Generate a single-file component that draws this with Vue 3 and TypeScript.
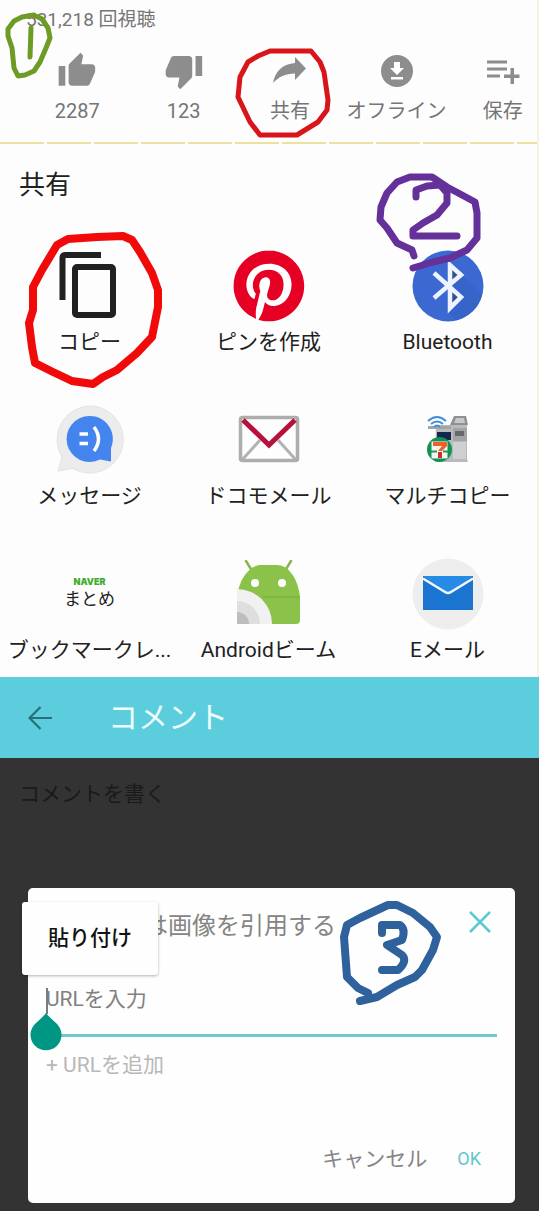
<script setup lang="ts">
import { ref } from 'vue'

type ActionIcon = 'up' | 'down' | 'share' | 'offline' | 'save'
type AppIcon = 'copy' | 'pinterest' | 'bluetooth' | 'message' | 'docomo' | 'printer' | 'naver' | 'android' | 'email'

const actions: { icon: ActionIcon; label: string }[] = [
  { icon: 'up', label: '2287' },
  { icon: 'down', label: '123' },
  { icon: 'share', label: '共有' },
  { icon: 'offline', label: 'オフライン' },
  { icon: 'save', label: '保存' },
]

const targets: { icon: AppIcon; label: string }[] = [
  { icon: 'copy', label: 'コピー' },
  { icon: 'pinterest', label: 'ピンを作成' },
  { icon: 'bluetooth', label: 'Bluetooth' },
  { icon: 'message', label: 'メッセージ' },
  { icon: 'docomo', label: 'ドコモメール' },
  { icon: 'printer', label: 'マルチコピー' },
  { icon: 'naver', label: 'ブックマークレ...' },
  { icon: 'android', label: 'Androidビーム' },
  { icon: 'email', label: 'Eメール' },
]

const comment = ref('')
const url = ref('')
</script>

<template>
  <main class="page">
    <section class="video">
      <p class="views">531,218 回視聴</p>
      <div class="actions">
        <button v-for="a in actions" :key="a.icon" class="action" type="button">
          <svg class="action-icon" viewBox="0 0 40 40" aria-hidden="true">
            <path v-if="a.icon === 'up'" transform="scale(1.66)" d="M1 21h4V9H1v12zm22-11c0-1.1-.9-2-2-2h-6.310l.95-4.570.03-.32c0-.41-.17-.79-.44-1.060L14.170 1 7.590 7.590C7.220 7.950 7 8.450 7 9v10c0 1.100.9 2 2 2h9c.83 0 1.540-.5 1.840-1.220l3.020-7.050c.09-.23.14-.47.14-.73v-2z" />
            <path v-else-if="a.icon === 'down'" transform="scale(1.66)" d="M15 3H6c-.83 0-1.540.5-1.840 1.220l-3.020 7.050c-.09.23-.14.47-.14.73v2c0 1.100.9 2 2 2h6.310l-.95 4.570-.03.32c0 .41.17.79.44 1.060L9.830 23l6.590-6.590c.36-.36.58-.86.58-1.410V5c0-1.100-.9-2-2-2zm4 0v12h4V3h-4z" />
            <path v-else-if="a.icon === 'share'" d="M25 6 36 17.500 25 29v-6.500C15 22.500 9 26 3 32 5 21 12 13 25 12z" />
            <g v-else-if="a.icon === 'offline'">
              <circle cx="21" cy="20" r="16" />
              <path fill="#fff" d="M18 11h6v6h4l-7 7-7-7h4zM15 26h12v2.500H15z" />
            </g>
            <path v-else d="M4 9.500h20v3H4zM4 16.500h20v3H4zM4 23.500h13v3H4zM27.500 17h3.500v6.500h5.500V27H31v6h-3.500v-6H21v-3.500h6.500z" />
          </svg>
          <span>{{ a.label }}</span>
        </button>
      </div>
    </section>

    <section class="share">
      <h2 class="share-title">共有</h2>
      <div class="targets">
        <button v-for="t in targets" :key="t.icon" class="target" type="button">
          <span v-if="t.icon === 'naver'" class="target-icon naver">
            <b>NAVER</b>
            <span>まとめ</span>
          </span>
          <svg v-else class="target-icon" viewBox="0 0 72 72" aria-hidden="true">
            <g v-if="t.icon === 'copy'" fill="none" stroke="#212121" stroke-width="6">
              <path d="M8.500 50V8q0-3 3-3H47" />
              <rect x="21" y="17" width="38" height="48" rx="2" />
            </g>
            <g v-else-if="t.icon === 'pinterest'">
              <circle cx="36" cy="36" r="34" fill="#fff" />
              <path transform="translate(.5 .5) scale(2.950)" fill="#e60023" d="M12.017 0C5.396 0 .029 5.367.029 11.987c0 5.079 3.158 9.417 7.618 11.162-.105-.949-.199-2.403.041-3.439.219-.937 1.406-5.957 1.406-5.957s-.359-.72-.359-1.781c0-1.663.967-2.911 2.168-2.911 1.024 0 1.518.769 1.518 1.688 0 1.029-.653 2.567-.992 3.992-.285 1.193.6 2.165 1.775 2.165 2.128 0 3.768-2.245 3.768-5.487 0-2.861-2.063-4.869-5.008-4.869-3.410 0-5.409 2.562-5.409 5.199 0 1.033.394 2.143.889 2.741.099.12.112.225.085.345-.09.375-.293 1.199-.334 1.363-.053.225-.172.271-.401.165-1.495-.69-2.433-2.878-2.433-4.646 0-3.776 2.748-7.252 7.920-7.252 4.158 0 7.392 2.967 7.392 6.923 0 4.135-2.607 7.462-6.233 7.462-1.214 0-2.354-.629-2.758-1.379l-.749 2.848c-.269 1.045-1.004 2.352-1.498 3.146 1.123.345 2.306.535 3.550.535 6.607 0 11.985-5.365 11.985-11.987C23.970 5.390 18.592.026 11.985.026z" />
            </g>
            <g v-else-if="t.icon === 'bluetooth'">
              <circle cx="36" cy="36" r="35.500" fill="#3b69d1" />
              <path d="M38 14 49 24l21 21A35.500 35.500 0 0 1 44 70.500L36 60z" fill="#3764c9" />
              <path d="M38 15v42l11-10-9-11 9-11z" fill="#31518f" />
              <path d="M22 23 49 47 38 58V15L49 25 22 48" fill="none" stroke="#eef4ff" stroke-width="4.500" />
            </g>
            <g v-else-if="t.icon === 'message'">
              <path d="M36 2A33.500 33.500 0 1 1 19 64.500L4 67 8 53A33.500 33.500 0 0 1 36 2z" fill="#ececec" stroke="#e4e4e4" />
              <path d="M35.500 12A23 23 0 0 1 57 44v13.500L46 55.500A23 23 0 1 1 35.500 12z" fill="#4384ee" />
              <path d="M25.500 30H34M25.500 39.500H34M40 23q9 12 0 24" fill="none" stroke="#fff" stroke-width="3.500" />
            </g>
            <g v-else-if="t.icon === 'docomo'" fill="none">
              <path d="M9 56 27 36M63 56 45 36" stroke="#b2b2b2" stroke-width="3" />
              <rect x="7.500" y="13.500" width="57" height="43" rx="2" stroke="#adadad" stroke-width="3.500" />
              <path d="M10 16 36 41 62 16" stroke="#b80f3d" stroke-width="5" />
            </g>
            <g v-else-if="t.icon === 'printer'">
              <path d="M42 12h12l2 9H38z" fill="#8f9092" />
              <path d="M44 14h8l1 5H42z" fill="#c8c9ca" />
              <path d="M24 21h31v34l1 3H23z" fill="#b9babc" />
              <path d="M16 22h23v3H16zM41 24h14v13H41z" fill="#a3a4a7" />
              <path d="M43 27h9v5h-9z" fill="#68696c" />
              <path d="M25 28h14v8H25z" fill="#13264e" />
              <path d="M41 38h13v17H41z" fill="#cfd0d1" />
              <g fill="none" stroke="#438ed5" stroke-width="2">
                <path d="M16 17q9-8 18 0M19 20q6-5 12 0M22 23q3-3 6 0" />
              </g>
              <circle cx="27.500" cy="45.500" r="12.500" fill="#119353" />
              <path d="M19.500 37.500h16v17h-16z" fill="#f4f6ee" />
              <path d="M21 38h14v4L30 47h-4l4-5h-9z" fill="#ee612c" />
              <path d="M26 48h4v6h-4z" fill="#c9322b" />
              <path d="M19 46.500h6v2h-6zM31 46.500h5v2h-5z" fill="#28965e" />
            </g>
            <g v-else-if="t.icon === 'android'">
              <path d="M13 3l8 13M58 3l-8 13" stroke="#8bb351" stroke-width="2.500" stroke-linecap="round" />
              <path d="M4 39C6 20 17 7 28 7h16c11 0 21 13 23 32v23q0 4-4 4H4z" fill="#8bc34a" />
              <path d="M30 39h37" stroke="#76a83d" />
              <circle cx="22" cy="25" r="4" fill="#fff" />
              <circle cx="49" cy="25" r="4" fill="#fff" />
              <path d="M4 31a35 35 0 0 1 35 35H4z" fill="#f1f1f1" />
              <path d="M4 43a23 23 0 0 1 23 23H4z" fill="#dedede" />
              <path d="M4 54a12 12 0 0 1 12 12H4z" fill="#bdbdbd" />
            </g>
            <g v-else>
              <circle cx="36" cy="36" r="35.500" fill="#efeeee" />
              <path d="M11 18h50v34H11z" fill="#1b75d0" />
              <path d="M11 18h50L36 36z" fill="#268be5" />
              <path d="M11 20.500 33 34q3 2 6 0l22-13.500" fill="none" stroke="#f2f9ff" stroke-width="2.500" />
            </g>
          </svg>
          <span class="target-label">{{ t.label }}</span>
        </button>
      </div>
    </section>

    <header class="appbar">
      <button class="back" type="button" aria-label="戻る">
        <svg viewBox="0 0 24 24" aria-hidden="true">
          <path d="M24 12H2M12.500 1 1.500 12l11 11" fill="none" stroke="#286f79" stroke-width="2.200" />
        </svg>
      </button>
      <h1>コメント</h1>
    </header>

    <section class="compose">
      <textarea v-model="comment" class="comment" aria-label="コメント" placeholder="コメントを書く"></textarea>

      <form class="dialog" @submit.prevent>
        <div class="dialog-head">
          <label for="url">は画像を引用する</label>
          <button class="close" type="button" aria-label="閉じる">
            <svg viewBox="0 0 22 22" aria-hidden="true">
              <path d="M1 1l20 20M21 1 1 21" fill="none" stroke="#5cc9cf" stroke-width="2.500" />
            </svg>
          </button>
        </div>
        <div class="field">
          <input id="url" v-model="url" type="text" placeholder="URLを入力" />
          <span class="caret"></span>
          <svg class="handle" viewBox="0 0 32 38" aria-hidden="true">
            <path d="M16 0q2 3 10 10a15.500 15.500 0 1 1-20 0Q14 3 16 0z" fill="#009684" />
          </svg>
        </div>
        <button class="add" type="button">+ URLを追加</button>
        <div class="buttons">
          <button type="button">キャンセル</button>
          <button class="ok" type="submit">OK</button>
        </div>
        <button class="paste" type="button">貼り付け</button>
      </form>
    </section>

    <svg class="marks" viewBox="0 0 539 1211" preserveAspectRatio="xMidYMin meet" aria-hidden="true">
      <g class="green">
        <path d="M34 15 22 17 14 21 8 29v7l4 12 1 10 1 10 4 8 7-1 9-4 6-9 6-14 4-10-2-10-6-9-8-4M31 28 30 57" />
      </g>
      <path class="red thin" d="M270 51h41l9 11 4 10 4 28-1 10-9 12-21 13h-37l-10-13-12-25 2-20 8-15 10-6z" />
      <path class="red" d="M123 236l9 4 8 12 12 21 6 17v17l-6 30-15 16-20 17-14 7-10 7-21-3-19-9-18-9-3-16-3-24 4-13v-23l9-17 15-25 11-6 29-2z" />
      <g class="purple">
        <path d="M414 256l-2-6-15-7-10-15-7-8 1-13 6-14 10-11 13-5h22l15 10 15 8 13 7 2 11v25l-10 12-17 8-17 4-20 6" />
        <path d="M416 197v-7l11-4 13-1 7 8v10l-10 12-14 8-10 7v6h44" />
      </g>
      <g class="blue">
        <path d="M360 1001l17-4 20-12 18-8 7-7 11-20 4-13-7-10-17-14-16-8h-9l-28 13-13 7-3 12 3 40 11 11 10 5" />
        <path d="M382 933v-8h18q6 4 2 15l-15 5 15 10q6 6-4 15h-16" />
      </g>
    </svg>
  </main>
</template>

<style>
body {
  margin: 0;
}
</style>

<style scoped>
.page {
  position: relative;
  overflow: hidden;
  background: #fdfdfd;
  color: #212121;
  font-family: Roboto, "Noto Sans CJK JP", sans-serif;
}

button {
  margin: 0;
  padding: 0;
  border: 0;
  background: none;
  color: inherit;
  font: inherit;
  cursor: pointer;
}

svg {
  display: block;
}

.video,
.share {
  border-right: 2px solid #f8f3dc;
}

.video {
  padding-top: 6px;
  color: #757575;
}

.video::after {
  content: "";
  display: block;
  height: 2px;
  margin-top: 17px;
  background: repeating-linear-gradient(90deg, #eee0a0 0 44px, #fdfdfd 44px 47px);
}

.views {
  margin: 0 0 18px 26px;
  font-size: 19px;
  line-height: 27px;
}

.actions {
  display: grid;
  grid-template-columns: repeat(5, 1fr);
  margin: 0 -19px 0 24px;
}

.action {
  display: flex;
  flex-direction: column;
  align-items: center;
  gap: 6px;
  font-size: 20px;
  line-height: 28px;
  white-space: nowrap;
}

.action-icon {
  width: 40px;
  height: 40px;
  fill: #8d8d8d;
}

.share {
  padding: 23px 0 13px;
}

.share-title {
  margin: 0 0 47px 19px;
  font-size: 26px;
  font-weight: 400;
  line-height: 36px;
}

.targets {
  display: grid;
  grid-template-columns: repeat(3, 1fr);
  row-gap: 48px;
}

.target {
  display: flex;
  flex-direction: column;
  align-items: center;
  gap: 6px;
  font-size: 21px;
  line-height: 28px;
  white-space: nowrap;
}

.target-icon {
  width: 72px;
  height: 72px;
}

.naver {
  display: flex;
  flex-direction: column;
  align-items: center;
  justify-content: center;
  font-size: 17px;
  line-height: 24px;
}

.naver b {
  color: #42ad2c;
  font-family: Inter, sans-serif;
  font-size: 9px;
  font-weight: 900;
  line-height: 10px;
}

.appbar {
  display: flex;
  align-items: center;
  gap: 56px;
  height: 81px;
  padding: 0 28px;
  background: #5bcddc;
  color: #effdff;
}

.back svg {
  width: 24px;
  height: 24px;
}

.appbar h1 {
  margin: 0;
  font-size: 30px;
  font-weight: 400;
  line-height: 44px;
}

.compose {
  display: flex;
  flex-direction: column;
  padding-bottom: 8px;
  background: #333;
}

.comment {
  height: 130px;
  box-sizing: border-box;
  padding: 20px 19px;
  border: 0;
  outline: 0;
  resize: none;
  background: none;
  color: #1c1c1c;
  font: inherit;
  font-size: 21px;
  line-height: 32px;
}

.comment::placeholder {
  color: #1a1a1a;
  opacity: 1;
}

.dialog {
  position: relative;
  margin: 0 24px 0 28px;
  padding: 18px 18px 28px;
  border-radius: 5px;
  background: #fefefe;
  color: #858585;
  font-size: 21px;
  line-height: 32px;
}

.dialog-head {
  display: flex;
  align-items: flex-start;
  justify-content: space-between;
  padding: 0 6px 0 98px;
  font-size: 24px;
  line-height: 40px;
}

.close {
  padding-top: 5px;
}

.close svg {
  width: 22px;
  height: 22px;
}

.field {
  position: relative;
  margin-top: 36px;
}

.field input {
  display: block;
  width: 100%;
  height: 55px;
  box-sizing: border-box;
  padding: 0 0 18px;
  border: 0;
  border-bottom: 3px solid #6fc9cf;
  border-radius: 0;
  outline: 0;
  background: none;
  color: #777;
  font: inherit;
}

.field input::placeholder {
  color: #808080;
  opacity: 1;
}

.caret {
  position: absolute;
  top: 6px;
  left: 0;
  width: 2px;
  height: 26px;
  background: #7c7c7c;
}

.handle {
  position: absolute;
  top: 31px;
  left: -16px;
  width: 32px;
  height: 38px;
}

.add {
  display: block;
  margin-top: 12px;
  color: #b8b8b8;
}

.buttons {
  display: flex;
  justify-content: flex-end;
  gap: 30px;
  margin-top: 62px;
  padding-right: 16px;
}

.ok {
  color: #61c6cf;
  font-size: 18px;
}

.paste {
  position: absolute;
  top: 14px;
  left: -6px;
  padding: 20px 26px 21px;
  border-radius: 3px;
  background: #fefefe;
  box-shadow: 0 1px 3px rgba(0, 0, 0, 0.3);
  color: #111;
  font-weight: 500;
}

.marks {
  position: absolute;
  top: 0;
  left: 0;
  width: 100%;
  fill: none;
  stroke-linecap: round;
  stroke-linejoin: round;
  pointer-events: none;
}

.green {
  stroke: #6d9b25;
  stroke-width: 5px;
}

.red {
  stroke: #f10a0a;
  stroke-width: 8px;
}

.red.thin {
  stroke: #d8151a;
  stroke-width: 5px;
}

.purple {
  stroke: #64309a;
  stroke-width: 7px;
}

.blue {
  stroke: #2f629c;
  stroke-width: 8px;
}
</style>
